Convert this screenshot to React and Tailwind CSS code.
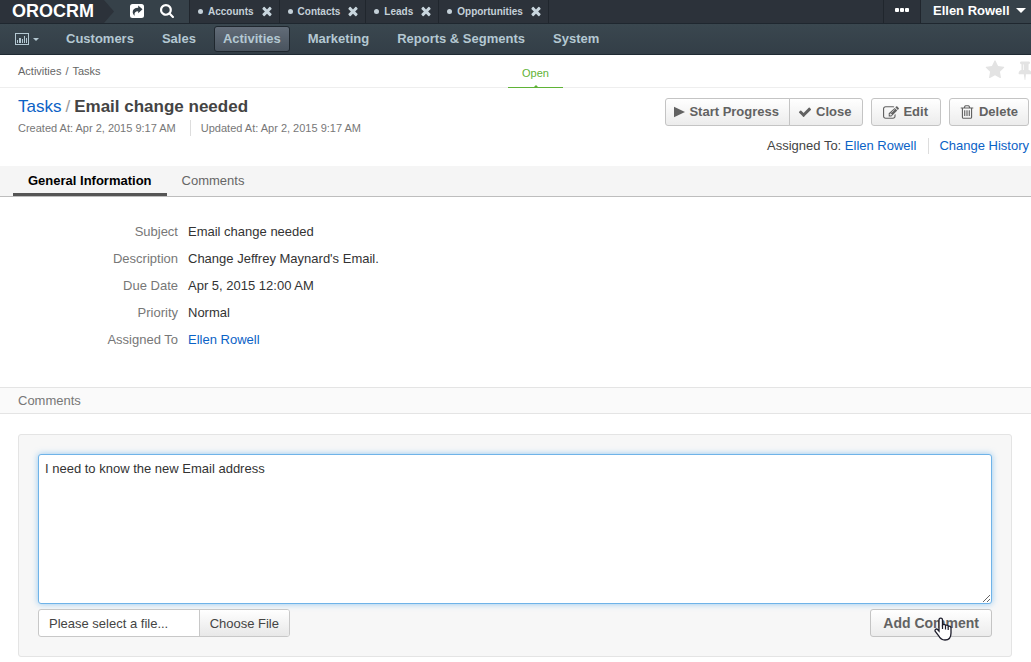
import React from 'react';

const PATHS = {
  trash:
    'M704 736v576q0 14-9 23t-23 9h-64q-14 0-23-9t-9-23V736q0-14 9-23t23-9h64q14 0 23 9t9 23zm256 0v576q0 14-9 23t-23 9h-64q-14 0-23-9t-9-23V736q0-14 9-23t23-9h64q14 0 23 9t9 23zm256 0v576q0 14-9 23t-23 9h-64q-14 0-23-9t-9-23V736q0-14 9-23t23-9h64q14 0 23 9t9 23zm128 724V512H448v948q0 22 7 40.5t14.5 27 10.5 8.5h832q3 0 10.5-8.5t14.5-27 7-40.5zM672 384h448l-48-117q-7-9-17-11H738q-10 2-17 11zm928 32v64q0 14-9 23t-23 9h-96v948q0 83-47 143.5t-113 60.5H480q-66 0-113-58.5T320 1464V512h-96q-14 0-23-9t-9-23v-64q0-14 9-23t23-9h309l70-167q15-37 54-63t79-26h320q40 0 79 26t54 63l70 167h309q14 0 23 9t9 23z',
  edit:
    'M888 1184l116-116-152-152-116 116v56h96v96h56zm440-720q-16-16-33 1L945 815q-17 17-1 33t33-1l350-350q17-17 1-33zm80 594v190q0 119-84.5 203.5T1120 1536H288q-119 0-203.5-84.5T0 1248V416q0-119 84.5-203.5T288 128h832q63 0 117 25 15 7 18 23 3 17-9 29l-49 49q-14 14-32 8-23-6-45-6H288q-66 0-113 47t-47 113v832q0 66 47 113t113 47h832q66 0 113-47t47-113v-126q0-13 9-22l64-64q15-15 35-7t20 29zm-96-738l288 288-672 672H640V928zm444 132l-92 92-288-288 92-92q28-28 68-28t68 28l152 152q28 28 28 68t-28 68z',
  check:
    'M1671 566q0 40-28 68l-724 724-136 136q-28 28-68 28t-68-28l-136-136-362-362q-28-28-28-68t28-68l136-136q28-28 68-28t68 28l294 295 656-657q28-28 68-28t68 28l136 136q28 28 28 68z',
  times:
    'M1490 1322q0 40-28 68l-136 136q-28 28-68 28t-68-28l-294-294-294 294q-28 28-68 28t-68-28l-136-136q-28-28-28-68t28-68l294-294-294-294q-28-28-28-68t28-68l136-136q28-28 68-28t68 28l294 294 294-294q28-28 68-28t68 28l136 136q28 28 28 68t-28 68l-294 294 294 294q28 28 28 68z',
  search:
    'M1216 832q0-185-131.5-316.5T768 384 451.5 515.5 320 832t131.5 316.5T768 1280t316.5-131.5T1216 832zm512 832q0 52-38 90t-90 38q-54 0-90-38l-343-342q-179 124-399 124-143 0-273.5-55.5t-225-150-150-225T64 832t55.5-273.5 150-225 225-150T768 128t273.5 55.5 225 150 150 225T1472 832q0 220-124 399l343 343q37 37 37 90z',
  star:
    'M1728 647q0 22-26 48l-363 354 86 500q1 7 1 20 0 21-10.5 35.5T1385 1619q-19 0-40-12l-449-236-449 236q-22 12-40 12-21 0-31.5-14.5T365 1569q0-6 2-20l86-500L89 695q-25-27-25-48 0-37 56-46l502-73 225-455q19-41 49-41t49 41l225 455 502 73q56 9 56 46z',
  pin:
    'M800 864V416q0-14-9-23t-23-9-23 9-9 23v448q0 14 9 23t23 9 23-9 9-23zm672 352q0 26-19 45t-45 19H979l-51 483q-2 12-10.5 20.5T897 1792h-1q-27 0-32-27l-76-485H384q-26 0-45-19t-19-45q0-123 78.5-221.5T576 896V384q-52 0-90-38t-38-90 38-90 90-38h640q52 0 90 38t38 90-38 90-90 38v512q99 0 177.5 98.5T1472 1216z',
};

function Icon({ name, className, viewBox = '0 0 1792 1792' }) {
  return (
    <svg viewBox={viewBox} className={`shrink-0 fill-current ${className}`} aria-hidden="true">
      <path d={PATHS[name]} />
    </svg>
  );
}

function Caret({ className }) {
  return (
    <svg viewBox="0 0 8 4" className={`shrink-0 fill-current ${className}`} aria-hidden="true">
      <path d="M0 0h8L4 4z" />
    </svg>
  );
}

function PinnedTab({ children }) {
  return (
    <div className="flex h-full shrink-0 items-center border-r border-[#20262d] pr-[5px] pb-px pl-2">
      <span className="mr-[5px] size-[5px] rounded-full bg-[#c4d0d8]" />
      <a href="#" className="text-[10px] font-bold text-[#c4d0d8]">{children}</a>
      <button type="button" aria-label={`Close ${children}`} className="ml-1.5 flex text-[#c9d6de]">
        <Icon name="times" className="size-3.5" />
      </button>
    </div>
  );
}

function TopBar() {
  return (
    <header className="flex h-6 items-center border-b border-[#1f272f] bg-[#2c323a]">
      <a href="#" className="flex h-full shrink-0 items-center pb-0.5 pl-3 text-lg leading-none font-bold text-white">
        OROCRM
      </a>
      <div className="flex h-full w-24 shrink-0 border-r border-[#20262d] bg-[#364149] text-white">
        <svg viewBox="0 0 20 23" className="h-full w-5" aria-hidden="true">
          <path d="M0 0h10l10 11.500-10 11.500H0z" fill="#2c323a" />
        </svg>
        <div className="flex items-center gap-4 pb-0.5 pl-4">
          <button type="button" aria-label="Share" className="flex">
            <svg viewBox="0 0 14 14" className="size-3.5" aria-hidden="true">
              <rect width="14" height="14" rx="2.500" fill="#fff" />
              <path d="M12.500 5.300 8.200 1.600v2.100C4.600 3.800 2.700 5.400 2.700 8c0 1.500.7 2.800 2 3.700-.7-2.700.5-4.300 3.500-4.400v2z" fill="#364149" />
            </svg>
          </button>
          <button type="button" aria-label="Search" className="flex">
            <Icon name="search" viewBox="64 128 1664 1664" className="size-3.5" />
          </button>
        </div>
      </div>
      <nav aria-label="Pinned pages" className="flex h-full min-w-0 flex-1">
        <PinnedTab>Accounts</PinnedTab>
        <PinnedTab>Contacts</PinnedTab>
        <PinnedTab>Leads</PinnedTab>
        <PinnedTab>Opportunities</PinnedTab>
      </nav>
      <button type="button" aria-label="More" className="flex h-full w-[38px] items-center justify-center gap-px border-x border-[#20262d] pb-1">
        <span className="size-1 rounded-[1px] bg-white" />
        <span className="size-1 rounded-[1px] bg-white" />
        <span className="size-1 rounded-[1px] bg-white" />
      </button>
      <button type="button" className="flex h-full w-[110px] shrink-0 items-center gap-1.5 bg-[#364149] pb-0.5 pl-3 text-[13px] font-bold whitespace-nowrap text-white">
        Ellen Rowell
        <Caret className="h-[5px] w-2.5" />
      </button>
    </header>
  );
}

function NavLink({ children, active }) {
  return (
    <a
      href="#"
      className={
        active
          ? 'flex h-[26px] items-center rounded-[3px] border border-[#1f272e] bg-linear-to-b from-[#626c78] to-[#49535e] px-2'
          : 'flex h-[26px] items-center px-2.5'
      }
    >
      {children}
    </a>
  );
}

function MainNav() {
  return (
    <nav aria-label="Main" className="flex h-[31px] items-center gap-2 border-b border-[#1f2a33] bg-linear-to-b from-[#3a474f] to-[#333e47] pl-[15px] text-[13px] font-bold whitespace-nowrap text-[#b4c8d2]">
      <button type="button" aria-label="Dashboards" className="flex w-[33px] items-center gap-1">
        <svg viewBox="0 0 14 12" className="h-3 w-3.5" aria-hidden="true">
          <rect x="0.500" y="0.500" width="13" height="11" fill="none" stroke="currentColor" />
          <path d="M2 7h1v3H2zM4 5h2v5H4zM7 6h1v4H7zM9 3h1v7H9zM11 5h1v5h-1z" fill="currentColor" />
        </svg>
        <Caret className="h-[3px] w-1.5" />
      </button>
      <NavLink>Customers</NavLink>
      <NavLink>Sales</NavLink>
      <NavLink active>Activities</NavLink>
      <NavLink>Marketing</NavLink>
      <NavLink>Reports &amp; Segments</NavLink>
      <NavLink>System</NavLink>
    </nav>
  );
}

function BreadcrumbRow() {
  return (
    <div className="relative flex h-[33px] items-center justify-between border-b border-[#eeeeee] pl-[18px]">
      <div className="text-[11px] text-[#666]">
        <a href="#">Activities</a>
        <span className="px-1">/</span>
        <a href="#">Tasks</a>
      </div>
      <div className="absolute -bottom-px left-[508px] flex h-[26px] w-[55px] flex-col items-center justify-between border-b border-[#5fb336] pt-[3px] text-[11px] text-[#5fb336]">
        <span>Open</span>
        <svg viewBox="0 0 4 2" className="h-0.5 w-1" aria-hidden="true">
          <path d="M0 2 2 0l2 2z" fill="#5fb336" />
        </svg>
      </div>
      <div className="-mr-1 flex items-center gap-2.5 pb-0.5 text-[#e3e3e3]">
        <button type="button" aria-label="Add to favorites" className="flex">
          <Icon name="star" className="size-5" />
        </button>
        <button type="button" aria-label="Pin page" className="flex">
          <Icon name="pin" className="size-5" />
        </button>
      </div>
    </div>
  );
}

const BUTTON =
  'flex h-7 items-center border border-[#c4c4c4] bg-linear-to-b from-white to-[#ececec] font-bold text-[#626262] whitespace-nowrap';

function PageHeader() {
  return (
    <div className="flex h-[78px] items-start justify-between pl-[18px]">
      <div className="pt-[9px]">
        <h1 className="flex gap-1 text-[17px] leading-5 text-[#444]">
          <a href="#" className="text-[#0b62c6]">Tasks</a>
          <span className="text-[#999]">/</span>
          <span className="font-bold">Email change needed</span>
        </h1>
        <div className="mt-1 flex h-3.5 items-center text-[11px] text-[#777]">
          <span className="border-r border-[#ddd] pr-3.5">Created At: Apr 2, 2015 9:17 AM</span>
          <span className="pl-2.5">Updated At: Apr 2, 2015 9:17 AM</span>
        </div>
      </div>
      <div className="flex flex-col items-end pt-2.5 pr-0.5">
        <div className="flex gap-2 text-[13px]">
          <div className="flex">
            <button type="button" className={`${BUTTON} gap-1 rounded-l-[3px] pr-2.5 pl-2`}>
              <svg viewBox="0 0 11 12" className="h-3 w-[11px] fill-current" aria-hidden="true">
                <path d="M0 .8v10.400L11 6z" />
              </svg>
              Start Progress
            </button>
            <button type="button" className={`${BUTTON} -ml-px gap-1 rounded-r-[3px] pr-[11px] pl-2`}>
              <Icon name="check" className="size-3.5" />
              Close
            </button>
          </div>
          <button type="button" className={`${BUTTON} gap-1 rounded-[3px] pr-3 pl-[11px]`}>
            <Icon name="edit" viewBox="0 0 1792 1664" className="h-[15px] w-4" />
            Edit
          </button>
          <button type="button" className={`${BUTTON} gap-1 rounded-[3px] pr-2.5 pl-[9px]`}>
            <Icon name="trash" className="size-4" />
            Delete
          </button>
        </div>
        <div className="mt-3 flex h-4 items-center text-[13px] leading-4 whitespace-nowrap text-[#444]">
          <span className="border-r border-[#ddd] pr-3">
            Assigned To: <a href="#" className="text-[#0b62c6]">Ellen Rowell</a>
          </span>
          <a href="#" className="pl-2.5 text-[#0b62c6]">Change History</a>
        </div>
      </div>
    </div>
  );
}

function SectionTabs() {
  return (
    <nav aria-label="Sections" className="flex h-[31px] border-b border-[#bdbdbd] bg-[#f5f5f5] pl-[13px] text-[13px]">
      <a href="#general" className="flex items-center border-b-[3px] border-[#555] px-[15px] pt-0.5 font-bold text-black">
        General Information
      </a>
      <a href="#comments" className="flex items-center border-b-[3px] border-transparent px-[15px] pt-0.5 text-[#666]">
        Comments
      </a>
    </nav>
  );
}

function Field({ label, children }) {
  return (
    <div className="flex gap-2.5">
      <dt className="w-40 text-right text-[#777]">{label}</dt>
      <dd className="text-[#333]">{children}</dd>
    </div>
  );
}

function HandCursor() {
  return (
    <svg viewBox="0 0 18 24" className="pointer-events-none absolute top-[7px] left-[63px] h-6 w-[18px]" aria-hidden="true">
      <path
        d="M5 14V3c0-2.600 3.500-2.600 3.500 0v5c.8-1 2.700-.8 3 .6.900-.8 2.500-.5 2.700.8 1.300-.7 2.800.2 2.800 1.600v5c0 4-2 7-6 7-3.500 0-5-1.500-6.500-4.500L1.300 14.500c-1-2 1.200-3.200 2.500-1.800z"
        fill="#fff"
        stroke="#1d1d2b"
        strokeWidth="1.300"
      />
      <path d="M8.500 8v4M11.500 9v3.500M14.200 10v3" stroke="#1d1d2b" strokeWidth="1.200" />
    </svg>
  );
}

function CommentForm() {
  return (
    <form className="mt-5 mr-[19px] mb-1 ml-[18px] rounded-[3px] border border-[#e4e4e4] bg-[#f7f7f7] p-[19px]">
      <textarea
        aria-label="Comment"
        defaultValue="I need to know the new Email address"
        className="block h-[150px] w-full rounded-[3px] border border-[#6fb3e8] bg-white px-1.5 py-1 text-[13px] leading-5 text-[#333] shadow-[0_0_6px_rgba(82,168,236,0.6)] outline-none"
      />
      <div className="mt-[5px] flex justify-between">
        <label className="flex h-7 w-[252px] overflow-hidden rounded-[3px] border border-[#c8c8c8] bg-white text-[13px] text-[#444]">
          <input type="file" className="sr-only" />
          <span className="flex flex-1 items-center pt-0.5 pl-2.5">Please select a file...</span>
          <span className="flex items-center border-l border-[#c8c8c8] bg-linear-to-b from-white to-[#e8e8e8] px-2.5 pt-0.5">
            Choose File
          </span>
        </label>
        <button type="button" className={`${BUTTON} relative rounded-[3px] px-3 text-sm`}>
          Add Comment
          <HandCursor />
        </button>
      </div>
    </form>
  );
}

export default function App() {
  return (
    <div className="overflow-x-hidden bg-white font-['Liberation_Sans',Arial,sans-serif]">
      <TopBar />
      <MainNav />
      <main>
        <BreadcrumbRow />
        <PageHeader />
        <SectionTabs />
        <dl id="general" className="flex flex-col gap-[7px] px-[18px] pt-[25px] pb-[37px] text-[13px] leading-5">
          <Field label="Subject">Email change needed</Field>
          <Field label="Description">Change Jeffrey Maynard's Email.</Field>
          <Field label="Due Date">Apr 5, 2015 12:00 AM</Field>
          <Field label="Priority">Normal</Field>
          <Field label="Assigned To">
            <a href="#" className="text-[#0b62c6]">Ellen Rowell</a>
          </Field>
        </dl>
        <section id="comments">
          <h2 className="flex h-[27px] items-center border-y border-[#e4e4e4] bg-[#fafafa] pl-[18px] text-[13px] text-[#777]">
            Comments
          </h2>
          <CommentForm />
        </section>
      </main>
    </div>
  );
}
